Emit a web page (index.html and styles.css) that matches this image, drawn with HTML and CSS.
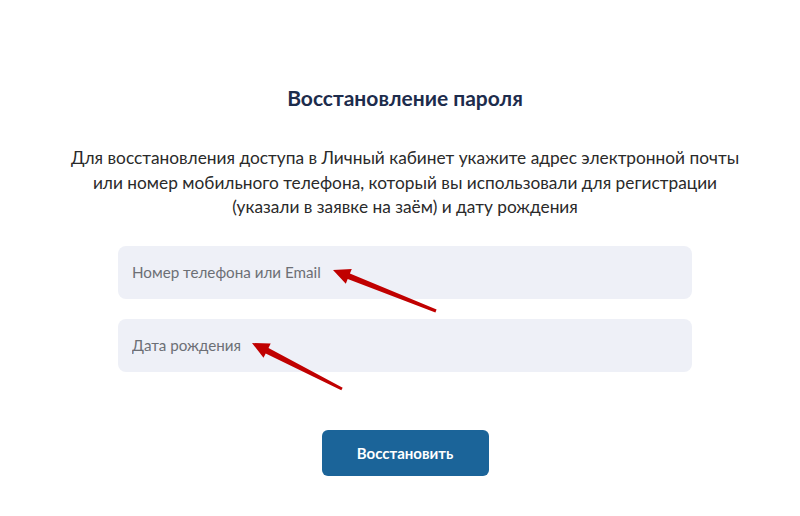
FILE: index.html
```html
<!DOCTYPE html>
<html lang="ru">
<head>
  <meta charset="UTF-8">
  <meta name="viewport" content="width=device-width, initial-scale=1.0">
  <title>Восстановление пароля</title>
  <link rel="stylesheet" href="styles.css">
</head>
<body>
  <div class="page">
    <h1 class="title">Восстановление пароля</h1>
    <p class="lead">
      Для восстановления доступа в Личный кабинет укажите адрес электронной почты<br>
      или номер мобильного телефона, который вы использовали для регистрации<br>
      (указали в заявке на заём) и дату рождения
    </p>
    <form class="form">
      <input class="field" type="text" placeholder="Номер телефона или Email">
      <input class="field" type="text" placeholder="Дата рождения">
      <button class="submit" type="button">Восстановить</button>
    </form>
  </div>

  <!-- annotation arrows -->
  <svg class="arrows" width="800" height="516" viewBox="0 0 800 516">
    <polygon fill="#c00000" points="333,270 351.8,268.9 349.9,273.5 436.6,309.6 435.4,312.4 347.7,279.1 345.8,283.7"/>
    <polygon fill="#c00000" points="252,343 270.7,343.6 268.5,348 342.7,387.7 341.3,390.3 265.7,353.4 263.5,357.8"/>
  </svg>
</body>
</html>
```

FILE: styles.css
```css
body {
  margin: 0;
  padding: 0;
  background: #fff;
  font-family: 'Lato', 'Open Sans', sans-serif;
  position: relative;
  height: 516px;
  overflow: hidden;
}

.page {
  padding: 84px 0 0 10px;
  display: flex;
  flex-direction: column;
  align-items: center;
}

.title {
  margin: 0;
  font-size: 21px;
  font-weight: 700;
  line-height: 28px;
  color: #1d2c4c;
}

.lead {
  margin: 34px 0 0;
  font-size: 17.3px;
  line-height: 24.5px;
  text-align: center;
  color: #2a2a2a;
}

.form {
  margin-top: 26px;
  width: 574px;
  display: flex;
  flex-direction: column;
  align-items: center;
  gap: 20px;
}

.field {
  box-sizing: border-box;
  width: 100%;
  height: 53px;
  padding: 0 14px;
  border: none;
  border-radius: 8px;
  background: #eef0f7;
  font-family: inherit;
  font-size: 15.2px;
  color: #333;
  outline: none;
}

.field::placeholder {
  color: #6c6f75;
}

.submit {
  margin-top: 38px;
  width: 167px;
  height: 46px;
  border: none;
  border-radius: 6px;
  background: #1b6499;
  color: #fff;
  font-family: inherit;
  font-size: 15px;
  font-weight: 700;
  cursor: pointer;
}

.arrows {
  position: absolute;
  top: 0;
  left: 0;
  pointer-events: none;
}
```
